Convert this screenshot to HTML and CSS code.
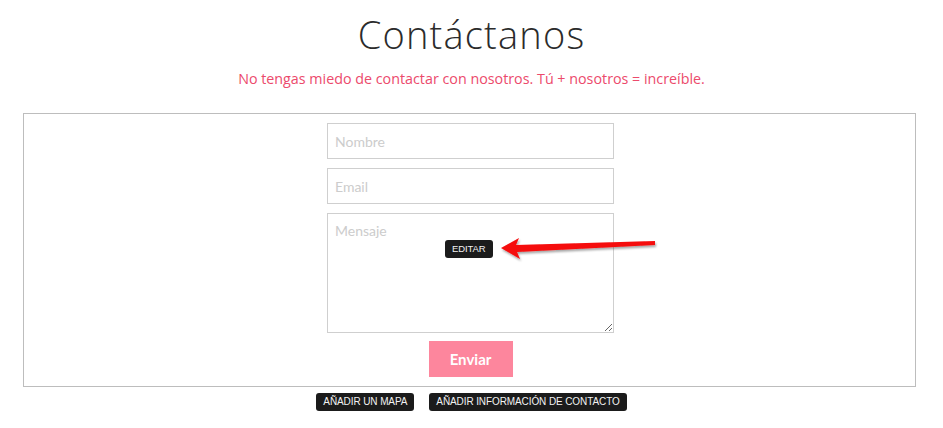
FILE: index.html
```html
<!DOCTYPE html>
<html lang="es">
<head>
    <meta charset="UTF-8">
    <meta name="viewport" content="width=device-width, initial-scale=1.0">
    <title>Contáctanos</title>
    <link rel="stylesheet" href="styles.css">
</head>
<body>
    <h1 class="title">Contáctanos</h1>
    <p class="subtitle">No tengas miedo de contactar con nosotros. Tú + nosotros = increíble.</p>
    <div class="form-box">
        <form class="contact-form">
            <input class="field" type="text" placeholder="Nombre">
            <input class="field" type="text" placeholder="Email">
            <div class="message-wrap">
                <textarea class="field message" placeholder="Mensaje"></textarea>
                <span class="badge edit-badge">EDITAR</span>
                <svg class="arrow" width="160" height="26" viewBox="0 0 160 26">
                    <defs>
                        <filter id="sh" x="-10%" y="-30%" width="120%" height="160%">
                            <feDropShadow dx="1" dy="2" stdDeviation="1.2" flood-color="#000" flood-opacity="0.35"/>
                        </filter>
                    </defs>
                    <path d="M2 11 L20 1 L17 8 L156 4 L156 8 L18 15 L21 22 Z" fill="#f50a0a" filter="url(#sh)"/>
                </svg>
            </div>
            <button class="send" type="button">Enviar</button>
        </form>
    </div>
    <div class="actions">
        <span class="badge">AÑADIR UN MAPA</span>
        <span class="badge">AÑADIR INFORMACIÓN DE CONTACTO</span>
    </div>
</body>
</html>
```

FILE: styles.css
```css
body {
    margin: 0;
    background-color: #ffffff;
    font-family: "Liberation Sans", Arial, sans-serif;
}
.title {
    margin: 12px 0 0;
    text-align: center;
    font-family: "Open Sans", sans-serif;
    font-weight: 300;
    font-size: 38px;
    line-height: 44px;
    letter-spacing: 1.2px;
    color: #2b2b2b;
}
.subtitle {
    margin: 14px 0 0;
    text-align: center;
    font-family: "Open Sans", sans-serif;
    font-size: 14.3px;
    line-height: 18px;
    color: #ec4a6c;
}
.form-box {
    margin: 25px 27px 0 23px;
    border: 1px solid #bdbdbd;
    padding: 9px 0 9px 2px;
}
.contact-form {
    width: 287px;
    margin: 0 auto;
    display: flex;
    flex-direction: column;
    align-items: center;
    gap: 9px;
}
.field {
    box-sizing: border-box;
    width: 287px;
    height: 36px;
    border: 1px solid #cfcfcf;
    padding: 0 7px;
    font-family: "Lato", sans-serif;
    font-size: 14px;
    outline: none;
}
.field::placeholder {
    color: #cccccc;
}
.message-wrap {
    position: relative;
    width: 287px;
    height: 120px;
}
.message {
    height: 120px;
    padding-top: 8px;
    resize: both;
    display: block;
}
.badge {
    display: inline-block;
    background-color: #1b1b1b;
    color: #f2f2f2;
    font-size: 10px;
    line-height: 18px;
    padding: 0 7px;
    border-radius: 3px;
    letter-spacing: -0.1px;
}
.edit-badge {
    position: absolute;
    left: 118px;
    top: 27px;
    font-size: 9.5px;
}
.arrow {
    position: absolute;
    left: 172px;
    top: 24px;
}
.send {
    margin-top: -1px;
    width: 84px;
    height: 36px;
    border: none;
    background-color: #fd869d;
    color: #ffffff;
    font-family: "Lato", sans-serif;
    font-weight: 700;
    font-size: 15px;
}
.actions {
    display: flex;
    justify-content: center;
    gap: 15px;
    margin: 6px 0 0 0;
}
```
